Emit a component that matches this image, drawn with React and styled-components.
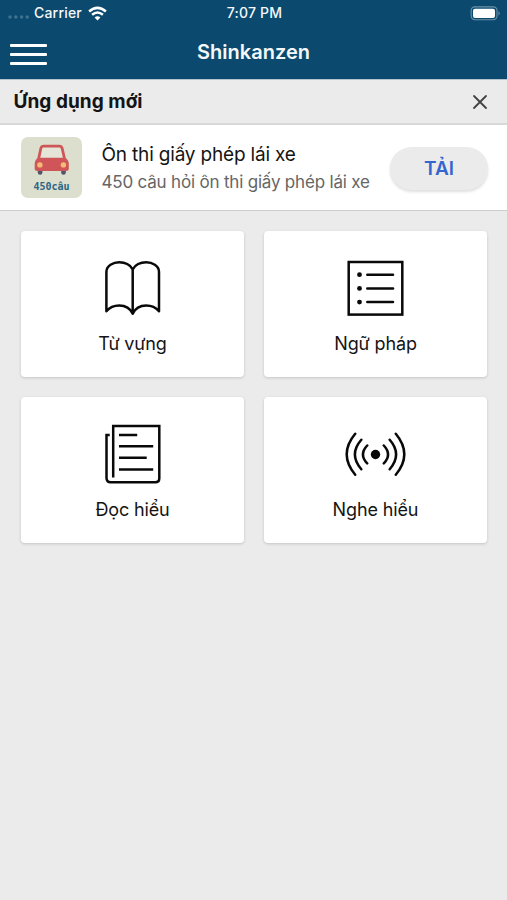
import React from "react";
import styled, { createGlobalStyle } from "styled-components";

const GlobalStyle = createGlobalStyle`
  * { box-sizing: border-box; }
  body {
    margin: 0;
    background: #ebebeb;
    font-family: Inter, "Noto Sans", sans-serif;
    color: #141414;
  }
`;

const Screen = styled.div`
  width: 507px;
  min-height: 900px;
  background: #ebebeb;
`;

const Header = styled.header`
  height: 79px;
  background: #0b4a6e;
  color: #f4f8fb;
`;

const StatusBar = styled.div`
  display: grid;
  grid-template-columns: 1fr auto 1fr;
  align-items: center;
  height: 26px;
  padding: 0 6px 0 8px;
  font-size: 13.5px;
  font-weight: 500;
  line-height: 26px;
`;

const Carrier = styled.div`
  display: flex;
  align-items: center;
  svg { flex: none; }
`;

const SignalDots = styled.svg`
  margin-top: 5px;
`;

const CarrierName = styled.span`
  width: 49px;
  margin: 0 5px;
  font-size: 14px;
  letter-spacing: 0.2px;
  white-space: nowrap;
`;

const Clock = styled.span`
  font-size: 14px;
  letter-spacing: 0.2px;
`;

const Battery = styled.svg`
  justify-self: end;
`;

const NavBar = styled.div`
  display: grid;
  grid-template-columns: 1fr auto 1fr;
  align-items: center;
  height: 53px;
  padding: 0 10px 1px;
`;

const MenuButton = styled.button`
  display: flex;
  flex-direction: column;
  gap: 6px;
  width: 37px;
  margin: 5px 0 0;
  padding: 0;
  border: 0;
  background: none;
`;

const MenuBar = styled.span`
  height: 3.2px;
  border-radius: 1px;
  background: #fff;
`;

const Title = styled.h1`
  margin: 0;
  font-size: 20px;
  font-weight: 600;
  line-height: 24px;
  letter-spacing: 0.02px;
`;

const SectionBar = styled.div`
  display: flex;
  align-items: center;
  justify-content: space-between;
  height: 46px;
  padding: 0 19px 0 13.5px;
  border-top: 1px solid #b4c4ce;
  border-bottom: 2px solid #d8d8d8;
`;

const SectionTitle = styled.h2`
  margin: 0;
  font-size: 19px;
  font-weight: 650;
  letter-spacing: 0.05px;
  white-space: nowrap;
`;

const CloseButton = styled.button`
  display: flex;
  padding: 0;
  border: 0;
  background: none;
`;

const Promo = styled.section`
  display: flex;
  align-items: center;
  height: 86px;
  padding: 0 19px 0 21px;
  background: #fff;
  border-bottom: 1px solid #cdcdcd;
`;

const AppIcon = styled.div`
  display: flex;
  flex: none;
  flex-direction: column;
  align-items: center;
  width: 61px;
  height: 61px;
  padding-top: 7px;
  border-radius: 7px;
  background: #dcdfcd;
`;

const AppIconLabel = styled.span`
  margin-top: 5px;
  color: #2c6684;
  font: bold 10px/12px "DejaVu Sans Mono", monospace;
`;

const PromoText = styled.div`
  flex: none;
  width: 287px;
  padding: 2px 0 0 19.5px;
  white-space: nowrap;
`;

const PromoTitle = styled.div`
  font-size: 19px;
  line-height: 28px;
  letter-spacing: -0.18px;
`;

const PromoSubtitle = styled.div`
  color: #666;
  font-size: 17px;
  line-height: 27px;
  letter-spacing: -0.19px;
`;

const GetButton = styled.button`
  flex: none;
  width: 98px;
  height: 43px;
  margin: 2px 0 0 auto;
  padding: 0 0 1px;
  border: 0;
  border-radius: 22px;
  background: #ebebeb;
  box-shadow: 0 2px 3px rgba(0, 0, 0, 0.13);
  color: #3566cf;
  font: 600 19px Inter, sans-serif;
`;

const Grid = styled.main`
  display: grid;
  grid-template-columns: 223px 223px;
  grid-auto-rows: 146px;
  gap: 20px;
  padding: 20px 20px 20px 21px;
`;

const Tile = styled.article`
  display: flex;
  flex-direction: column;
  align-items: center;
  padding-top: 25px;
  border-radius: 4px;
  background: #fff;
  box-shadow: 0 1px 3px rgba(0, 0, 0, 0.17);
`;

const TileIcon = styled.svg`
  width: 64px;
  height: 64px;
  fill: none;
  stroke: #090909;
  stroke-width: 2.5;
  stroke-linecap: ${(p) => p.$cap || "round"};
  stroke-linejoin: ${(p) => p.$join || "round"};
`;

const TileLabel = styled.span`
  margin-top: 11px;
  font-size: 18px;
  line-height: 26px;
  letter-spacing: -0.13px;
`;

const SignalIcon = () => (
  <SignalDots width="21" height="6" viewBox="0 0 21 6" fill="#41728f">
    {[2, 7.8, 13.6, 19.2].map((x) => (
      <circle key={x} cx={x} cy="4" r="1.7" />
    ))}
  </SignalDots>
);

const WifiIcon = () => (
  <svg width="19" height="15" viewBox="0 0 19 15" fill="none" stroke="#fff" strokeWidth="2.5">
    <path d="M1.1 5.5 Q9.5 -1.8 17.9 5.5" />
    <path d="M4.1 8.8 Q9.5 4.3 14.9 8.8" />
    <path d="M9.5 14.5 L6.6 11.4 Q9.5 9 12.4 11.4 Z" fill="#fff" stroke="none" />
  </svg>
);

const BatteryIcon = () => (
  <Battery width="31" height="15" viewBox="0 0 31 15">
    <rect x="1.2" y="0.9" width="25.8" height="12.8" rx="3.6" fill="none" stroke="#6c91a7" strokeWidth="1.1" />
    <rect x="3" y="2.8" width="22" height="9.2" rx="2" fill="#fff" />
    <path d="M28.5 5 Q31 7.3 28.5 9.7 Z" fill="#6c91a7" />
  </Battery>
);

const CloseIcon = () => (
  <svg width="16" height="16" viewBox="0 0 16 16" stroke="#424242" strokeWidth="1.8" strokeLinecap="round">
    <path d="M2 2 L14 14 M14 2 L2 14" />
  </svg>
);

const CarIcon = () => (
  <svg width="36" height="32" viewBox="0 0 36 32">
    <path d="M3.8 26 h4.6 v2.8 q0 2 -2.3 2 q-2.3 0 -2.3 -2z M27.2 26 h4.6 v2.8 q0 2 -2.3 2 q-2.3 0 -2.3 -2z" fill="#4e566b" />
    <path d="M4.6 15 L6.8 4.5 Q7.4 2.2 9.8 2.2 H25.2 Q27.6 2.2 28.2 4.5 L30.6 15" fill="#e4e5d7" stroke="#cf5658" strokeWidth="2.8" />
    <path d="M4.5 13.8 H30.8 Q34.8 15.5 34.8 20 V24.5 Q34.8 27 32 27 H3.5 Q0.7 27 0.7 24.5 V20 Q0.7 15.5 4.5 13.8 Z" fill="#cf5558" />
    <circle cx="5.9" cy="20.9" r="2.7" fill="#f4bd73" />
    <circle cx="29.4" cy="20.9" r="2.7" fill="#f4bd73" />
  </svg>
);

const BookIcon = () => (
  <TileIcon viewBox="0 0 64 64">
    <path d="M31.7 13.3 C28.7 8.3 23.7 6.3 18.2 6.3 C12.2 6.3 5.4 9.8 5.4 15.8 V55.3 C8.7 51.3 13.2 49.5 18.2 49.5 C24.2 49.5 29.2 52.3 31.7 57.8 C34.2 52.3 39.2 49.5 45.2 49.5 C50.2 49.5 54.7 51.3 58 55.3 V15.8 C58 9.8 51.2 6.3 45.2 6.3 C39.7 6.3 34.7 8.3 31.7 13.3 V57.8" />
  </TileIcon>
);

const ListIcon = () => (
  <TileIcon viewBox="0 0 64 64" $join="miter">
    <rect x="4.7" y="6" width="53.6" height="52.6" />
    {[18.7, 32.4, 46.1].map((y) => (
      <React.Fragment key={y}>
        <circle cx="15.5" cy={y} r="2.4" fill="#090909" stroke="none" />
        <path d={`M23.3 ${y} H49`} />
      </React.Fragment>
    ))}
  </TileIcon>
);

const DocumentIcon = () => (
  <TileIcon viewBox="0 0 64 64" $cap="butt" $join="miter">
    <path d="M12.2 55.5 V4 H58.3 V56.3 Q58.3 60.3 54.3 60.3 H9.7 Q5.5 60.3 5.5 56.1 V13 H8.7" />
    <path d="M18 13 H36.2 M18 24.3 H52.2 M18 35.8 H45.7 M18 47.5 H52.2" />
  </TileIcon>
);

const BroadcastIcon = () => (
  <TileIcon viewBox="0 0 64 64">
    <circle cx="31.5" cy="32.5" r="4.7" fill="#090909" stroke="none" />
    <path d="M11.2 11.8 Q-5.8 32.3 11.2 52.8 M17.3 17.8 Q4.5 32.5 17.3 47.2 M23.2 23.5 Q14.7 32.4 23.2 41.3" />
    <path d="M51.8 11.8 Q68.8 32.3 51.8 52.8 M45.7 17.8 Q58.5 32.5 45.7 47.2 M39.8 23.5 Q48.3 32.4 39.8 41.3" />
  </TileIcon>
);

const TILES = [
  { label: "Từ vựng", Icon: BookIcon },
  { label: "Ngữ pháp", Icon: ListIcon },
  { label: "Đọc hiểu", Icon: DocumentIcon },
  { label: "Nghe hiểu", Icon: BroadcastIcon },
];

export default function App() {
  return (
    <>
      <GlobalStyle />
      <Screen>
        <Header>
          <StatusBar>
            <Carrier>
              <SignalIcon />
              <CarrierName>Carrier</CarrierName>
              <WifiIcon />
            </Carrier>
            <Clock>7:07 PM</Clock>
            <BatteryIcon />
          </StatusBar>
          <NavBar>
            <MenuButton aria-label="Menu">
              <MenuBar />
              <MenuBar />
              <MenuBar />
            </MenuButton>
            <Title>Shinkanzen</Title>
          </NavBar>
        </Header>
        <SectionBar>
          <SectionTitle>Ứng dụng mới</SectionTitle>
          <CloseButton aria-label="Đóng">
            <CloseIcon />
          </CloseButton>
        </SectionBar>
        <Promo>
          <AppIcon>
            <CarIcon />
            <AppIconLabel>450câu</AppIconLabel>
          </AppIcon>
          <PromoText>
            <PromoTitle>Ôn thi giấy phép lái xe</PromoTitle>
            <PromoSubtitle>450 câu hỏi ôn thi giấy phép lái xe</PromoSubtitle>
          </PromoText>
          <GetButton>TẢI</GetButton>
        </Promo>
        <Grid>
          {TILES.map(({ label, Icon }) => (
            <Tile key={label}>
              <Icon />
              <TileLabel>{label}</TileLabel>
            </Tile>
          ))}
        </Grid>
      </Screen>
    </>
  );
}
